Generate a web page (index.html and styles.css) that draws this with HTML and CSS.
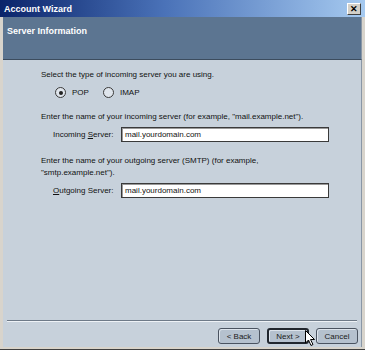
FILE: index.html
```html
<!DOCTYPE html>
<html lang="en">
<head>
  <meta charset="UTF-8">
  <title>Account Wizard</title>
  <link rel="stylesheet" href="styles.css">
</head>
<body>
  <div class="window">
    <div class="titlebar">
      <span class="title">Account Wizard</span>
      <span class="close">&#x2715;</span>
    </div>
    <div class="header">Server Information</div>
    <div class="content">
      <p class="line">Select the type of incoming server you are using.</p>
      <div class="radios">
        <label class="radio"><span class="dot on"></span>POP</label>
        <label class="radio"><span class="dot"></span>IMAP</label>
      </div>
      <p class="line gap">Enter the name of your incoming server (for example, "mail.example.net").</p>
      <div class="field">
        <span class="label">Incoming <u>S</u>erver:</span>
        <div class="input">mail.yourdomain.com</div>
      </div>
      <p class="line gap">Enter the name of your outgoing server (SMTP) (for example,<br>"smtp.example.net").</p>
      <div class="field">
        <span class="label"><u>O</u>utgoing Server:</span>
        <div class="input">mail.yourdomain.com</div>
      </div>
    </div>
    <div class="footer">
      <button class="btn">&lt; Back</button>
      <button class="btn default">Next &gt;</button>
      <button class="btn">Cancel</button>
      <svg class="cursor" width="11" height="17" viewBox="0 0 11 17">
        <path d="M0.5 0.5 L0.5 13 L3.5 10 L6 15.5 L8 14.5 L5.5 9.5 L9.5 9.5 Z" fill="#fff" stroke="#000" stroke-width="1"/>
      </svg>
    </div>
  </div>
</body>
</html>
```

FILE: styles.css
```css
* { margin: 0; padding: 0; box-sizing: border-box; }
body { background: #d4d0c8; font-family: 'Liberation Sans', Arial, sans-serif; font-size: 8px; color: #111; }

/* Window frame */
.window {
  width: 365px; height: 350px;
  display: flex; flex-direction: column;
  background: #d8d4cc;
  padding: 0 3px 2px 3px;
  border-bottom: 1px solid #404040;
}
.titlebar {
  height: 17px; margin: 0 -3px;
  display: flex; align-items: center; justify-content: space-between;
  padding: 0 4px 0 4px;
  background: linear-gradient(90deg, #0a246a 0%, #4a72b8 45%, #a6caf0 100%);
}
.title { color: #fff; font-weight: bold; font-size: 9px; }
.close {
  width: 14px; height: 12px;
  display: flex; align-items: center; justify-content: center;
  background: #d4d0c8; color: #000; font-size: 9px; font-weight: bold;
  border: 1px solid; border-color: #fff #404040 #404040 #fff;
}

/* Header band */
.header {
  height: 43px;
  background: #5c7591;
  border-bottom: 1px solid #3c4c5e;
  border-right: 1px solid #8a97a6;
  color: #fff; font-weight: bold; font-size: 9px;
  padding: 9px 4px;
}

/* Body */
.content {
  flex: 1;
  background: #c7d1db;
  padding: 9px 0 0 38px;
  border-right: 1px solid #8a97a6;
}
.line { line-height: 12px; }
.gap { margin-top: 13px; }
.radios { display: flex; gap: 14px; padding: 6px 0 0 14px; }
.radio { display: flex; align-items: center; gap: 6px; }
.dot {
  width: 11px; height: 11px; border-radius: 50%;
  border: 1px solid #3a3a3a; background: #dfe5ec;
  display: flex; align-items: center; justify-content: center;
}
.dot.on::after { content: ''; width: 4px; height: 4px; border-radius: 50%; background: #222; }

.field { display: flex; align-items: center; padding: 4px 0 0 12px; }
.label { width: 68px; white-space: nowrap; }
.input {
  width: 208px; height: 15px;
  background: #fff; border: 1px solid #3a3a3a;
  box-shadow: inset 1px 1px 0 #999;
  padding: 1px 3px; line-height: 12px;
}

/* Footer */
.footer {
  position: relative;
  height: 27px;
  background: #c7d1db;
  border-right: 1px solid #8a97a6;
  display: flex; justify-content: flex-end; align-items: flex-start;
  gap: 7px; padding: 8px 3px 0 0;
}
.footer::before {
  content: ''; position: absolute; top: 0; left: 4px; right: 4px;
  border-top: 1px solid #6e7a88; border-bottom: 1px solid #eef2f6;
}
.btn {
  width: 42px; height: 16px;
  font-family: inherit; font-size: 8px; color: #1a1a1a;
  background: #b5c1ce;
  border: 1px solid #4a5360; border-radius: 3px;
  box-shadow: inset 1px 1px 0 #dde4ec;
}
.btn.default { border: 2px solid #20262e; }
.cursor { position: absolute; left: 302px; top: 10px; }
```
